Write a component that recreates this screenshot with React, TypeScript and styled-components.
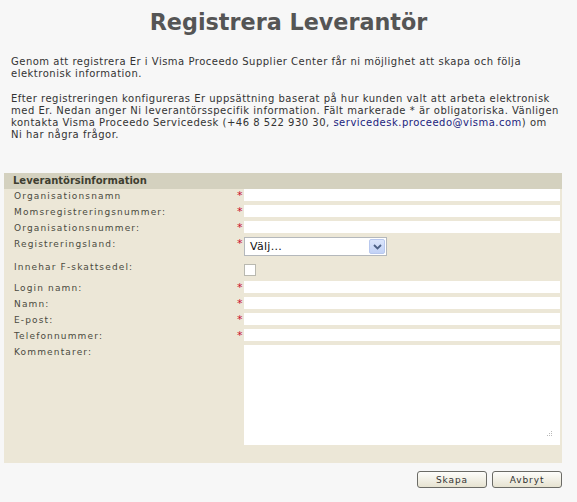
import styled, { createGlobalStyle } from 'styled-components'

const GlobalStyle = createGlobalStyle`
  html, body {
    margin: 0;
    padding: 0;
    background: #f7f7f7;
  }
  body {
    font-family: "DejaVu Sans", Verdana, sans-serif;
    color: #333;
  }
`

const Page = styled.div`
  width: 577px;
  height: 502px;
  overflow: hidden;
  background: #f7f7f7;
`

const Title = styled.h1`
  margin: 0;
  padding-top: 9px;
  height: 29px;
  text-align: center;
  font-size: 22.3px;
  font-weight: bold;
  color: #555;
`

const Intro = styled.div`
  padding: 18px 10px 0 11px;
`

const Para = styled.p`
  margin: 0 0 13px;
  font-size: 10px;
  line-height: 12px;
  letter-spacing: 0.5px;
  color: #333;
`

const Mail = styled.a`
  color: #1a237e;
  text-decoration: none;
`

const Panel = styled.div`
  margin: 32px 15px 0 4px;
  background: #ece7d7;
  padding-bottom: 18px;
`

const PanelHeader = styled.div`
  height: 16px;
  line-height: 16px;
  padding-left: 9px;
  background: #d4d1bf;
  font-size: 10px;
  font-weight: bold;
  color: #3e3e30;
`

const Form = styled.div`
  display: grid;
  grid-template-columns: 223px 7px 1fr;
  padding: 0 2px 0 10px;
`

const Label = styled.div`
  font-size: 9px;
  line-height: 14px;
  letter-spacing: 1.15px;
  color: #4a4a40;
`

const Req = styled.div`
  color: #c8102e;
  font-size: 11px;
  line-height: 13px;
`

const Cell = styled.div<{ $h: number }>`
  height: ${(p) => p.$h}px;
`

const TextInput = styled.input`
  display: block;
  box-sizing: border-box;
  width: 100%;
  height: 12px;
  border: none;
  background: #fff;
  padding: 0;
  margin: 0;
`

const SelectBox = styled.div`
  position: relative;
  box-sizing: border-box;
  width: 143px;
  height: 19px;
  border: 1px solid #b4b8bc;
  background: #fff;
  font-size: 11px;
  line-height: 17px;
  padding-left: 5px;
  color: #111;
  letter-spacing: 0.3px;
`

const SelectButton = styled.div`
  position: absolute;
  right: 1px;
  top: 1px;
  width: 16px;
  height: 15px;
  border-radius: 2px;
  background: linear-gradient(#dbe5fb, #c2d2f5);
  border: 1px solid #b8c8ee;
  box-sizing: border-box;
  display: flex;
  align-items: center;
  justify-content: center;
`

const Check = styled.div`
  margin-top: 4px;
  width: 12px;
  height: 12px;
  box-sizing: border-box;
  border: 1px solid #b9b9b0;
  background: #fff;
`

const Area = styled.div`
  position: relative;
  height: 100px;
  background: #fff;
`

const Grip = styled.svg`
  position: absolute;
  right: 7px;
  bottom: 7px;
`

const Buttons = styled.div`
  display: flex;
  justify-content: flex-end;
  gap: 5px;
  margin: 8px 15px 0 0;
`

const Button = styled.button`
  width: 70px;
  height: 17px;
  padding: 0;
  border: 1px solid #6b6b66;
  border-radius: 3px;
  background: linear-gradient(#fdfdfb, #e7e3d1);
  font-family: "DejaVu Sans", Verdana, sans-serif;
  font-size: 9px;
  letter-spacing: 0.9px;
  color: #333;
`

type Row =
  | { kind: 'text'; label: string; req: boolean }
  | { kind: 'select'; label: string }
  | { kind: 'check'; label: string }
  | { kind: 'area'; label: string }

const rows: Row[] = [
  { kind: 'text', label: 'Organisationsnamn', req: true },
  { kind: 'text', label: 'Momsregistreringsnummer:', req: true },
  { kind: 'text', label: 'Organisationsnummer:', req: true },
  { kind: 'select', label: 'Registreringsland:' },
  { kind: 'check', label: 'Innehar F-skattsedel:' },
  { kind: 'text', label: 'Login namn:', req: true },
  { kind: 'text', label: 'Namn:', req: true },
  { kind: 'text', label: 'E-post:', req: true },
  { kind: 'text', label: 'Telefonnummer:', req: true },
  { kind: 'area', label: 'Kommentarer:' },
]

function rowHeight(r: Row): number {
  if (r.kind === 'select') return 23
  if (r.kind === 'check') return 21
  if (r.kind === 'area') return 100
  return 16
}

function Field({ row }: { row: Row }) {
  if (row.kind === 'select') {
    return (
      <SelectBox>
        Välj...
        <SelectButton>
          <svg width="9" height="6" viewBox="0 0 9 6">
            <path d="M1 1 L4.5 4.5 L8 1" fill="none" stroke="#4d6185" strokeWidth="1.8" />
          </svg>
        </SelectButton>
      </SelectBox>
    )
  }
  if (row.kind === 'check') return <Check />
  if (row.kind === 'area') {
    return (
      <Area>
        <Grip width="7" height="7" viewBox="0 0 7 7">
          <g fill="#b9b9b9">
            <rect x="5" y="0" width="1" height="1" />
            <rect x="3" y="2" width="1" height="1" />
            <rect x="5" y="2" width="1" height="1" />
            <rect x="1" y="4" width="1" height="1" />
            <rect x="3" y="4" width="1" height="1" />
            <rect x="5" y="4" width="1" height="1" />
          </g>
        </Grip>
      </Area>
    )
  }
  return <TextInput type="text" />
}

export default function App() {
  return (
    <Page>
      <GlobalStyle />
      <Title>Registrera Leverantör</Title>
      <Intro>
        <Para>
          Genom att registrera Er i Visma Proceedo Supplier Center får ni möjlighet att skapa och följa elektronisk
          information.
        </Para>
        <Para>
          Efter registreringen konfigureras Er uppsättning baserat på hur kunden valt att arbeta elektronisk med Er.
          Nedan anger Ni leverantörsspecifik information. Fält markerade * är obligatoriska. Vänligen kontakta Visma
          Proceedo Servicedesk (+46 8 522 930 30, <Mail href="#">servicedesk.proceedo@visma.com</Mail>) om{' '}
          {'Ni\u00a0har'} några frågor.
        </Para>
      </Intro>
      <Panel>
        <PanelHeader>Leverantörsinformation</PanelHeader>
        <Form>
          {rows.map((r) => {
            const h = rowHeight(r)
            const req = r.kind === 'select' || (r.kind === 'text' && r.req)
            return [
              <Cell key={r.label + 'l'} $h={h}>
                <Label>{r.label}</Label>
              </Cell>,
              <Cell key={r.label + 'r'} $h={h}>
                {req && <Req>*</Req>}
              </Cell>,
              <Cell key={r.label + 'f'} $h={h}>
                <Field row={r} />
              </Cell>,
            ]
          })}
        </Form>
      </Panel>
      <Buttons>
        <Button>Skapa</Button>
        <Button>Avbryt</Button>
      </Buttons>
    </Page>
  )
}
